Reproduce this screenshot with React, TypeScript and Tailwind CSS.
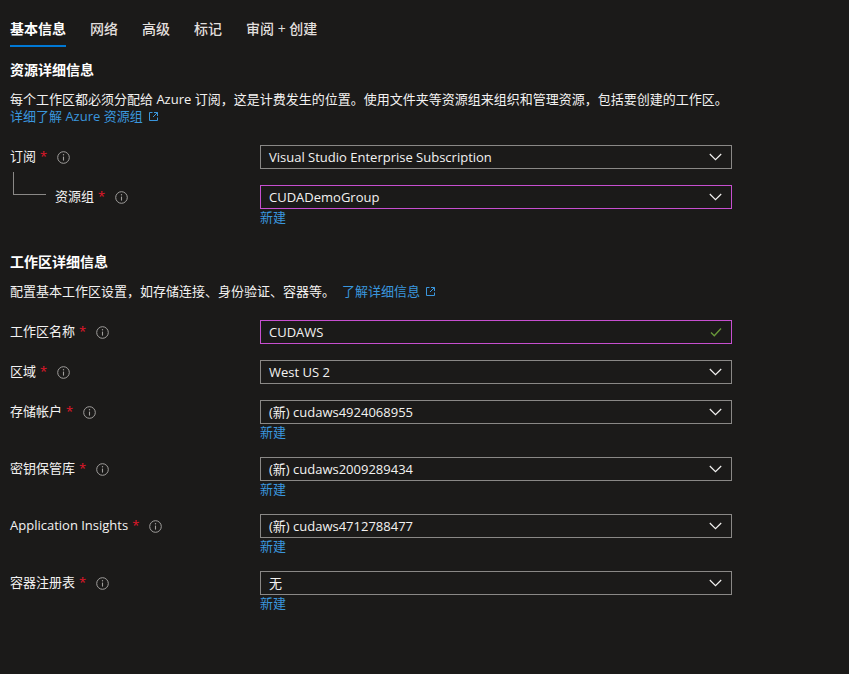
import React from 'react'

const font = "font-['Segoe_UI','Open_Sans','Noto_Sans_CJK_SC',sans-serif]"

function Info() {
  return (
    <svg width="13" height="13" viewBox="0 0 13 13" className="shrink-0">
      <circle cx="6.5" cy="6.5" r="5.8" fill="none" stroke="#a19f9d" strokeWidth="1" />
      <line x1="6.5" y1="5.6" x2="6.5" y2="9.6" stroke="#a19f9d" strokeWidth="1.1" />
      <circle cx="6.5" cy="3.8" r="0.7" fill="#a19f9d" />
    </svg>
  )
}

function ExtLink() {
  return (
    <svg width="11" height="11" viewBox="0 0 11 11" className="inline-block ml-[5px] -mt-[2px]">
      <path d="M4.5 1.5H1.5v8h8V6.5" fill="none" stroke="#3a96dd" strokeWidth="1" />
      <path d="M6 1.5h3.5V5M9.5 1.5L5 6" fill="none" stroke="#3a96dd" strokeWidth="1" />
    </svg>
  )
}

function Chevron() {
  return (
    <svg width="13" height="8" viewBox="0 0 13 8">
      <path d="M0.8 1l5.7 5.6L12.2 1" fill="none" stroke="#f3f2f1" strokeWidth="1.2" />
    </svg>
  )
}

function Check() {
  return (
    <svg width="12" height="10" viewBox="0 0 12 10">
      <path d="M1 5.5l3.3 3.2L11 1.5" fill="none" stroke="#6a9a3a" strokeWidth="1.3" />
    </svg>
  )
}

type RowProps = {
  label: string
  value: string
  pink?: boolean
  check?: boolean
  create?: boolean
  tree?: boolean
}

function Row({ label, value, pink, check, create, tree }: RowProps) {
  return (
    <div className="flex mb-4">
      <div className="w-[250px] h-6 flex items-center">
        {tree && (
          <div className="self-start ml-[3px] -mt-[13px] h-[23px] w-[33px] border-l border-b border-[#8a8886]" />
        )}
        <span className={`text-[13px] text-[#f3f2f1] ${tree ? 'ml-[9px]' : ''}`}>{label}</span>
        <span className="text-[13px] text-[#e3172a] ml-[4px]">*</span>
        <span className="ml-[10px] flex"><Info /></span>
      </div>
      <div className="w-[472px]">
        <div
          className={`h-6 border flex items-center justify-between pl-[8px] pr-[9px] ${pink ? 'border-[#c74fd0]' : 'border-[#8a8886]'}`}
        >
          <span className="text-[13px] text-[#f3f2f1] leading-none">{value}</span>
          {check ? <Check /> : <Chevron />}
        </div>
        {create && <div className="text-[13px] leading-[17px] text-[#3a96dd]">新建</div>}
      </div>
    </div>
  )
}

export default function App() {
  const tabs = ['基本信息', '网络', '高级', '标记', '审阅 + 创建']
  return (
    <div className={`w-[849px] h-[674px] bg-[#1b1a19] pl-[10px] ${font}`}>
      <div className="flex gap-6">
        {tabs.map((t, i) => (
          <div key={t} className="pt-[19px]">
            <div className={`text-[14px] leading-5 ${i === 0 ? 'font-semibold text-white' : 'font-medium text-[#e1dfdd]'}`}>{t}</div>
            <div className={`mt-[6px] h-[2px] ${i === 0 ? 'bg-[#0078d4]' : ''}`} />
          </div>
        ))}
      </div>

      <div className="mt-[13px] text-[14px] leading-5 font-semibold text-white">资源详细信息</div>
      <div className="mt-[11px] text-[13px] leading-[17px] text-[#f3f2f1]">
        每个工作区都必须分配给 Azure 订阅，这是计费发生的位置。使用文件夹等资源组来组织和管理资源，包括要创建的工作区。
      </div>
      <div className="text-[13px] leading-[17px] text-[#3a96dd]">
        详细了解 Azure 资源组<ExtLink />
      </div>

      <div className="mt-5">
        <Row label="订阅" value="Visual Studio Enterprise Subscription" />
        <Row label="资源组" value="CUDADemoGroup" pink create tree />
      </div>

      <div className="mt-[26px] text-[14px] leading-5 font-semibold text-white">工作区详细信息</div>
      <div className="mt-[11px] text-[13px] leading-[17px] text-[#f3f2f1]">
        配置基本工作区设置，如存储连接、身份验证、容器等。
        <span className="ml-[7px] text-[#3a96dd]">了解详细信息<ExtLink /></span>
      </div>

      <div className="mt-5">
        <Row label="工作区名称" value="CUDAWS" pink check />
        <Row label="区域" value="West US 2" />
        <Row label="存储帐户" value="(新) cudaws4924068955" create />
        <Row label="密钥保管库" value="(新) cudaws2009289434" create />
        <Row label="Application Insights" value="(新) cudaws4712788477" create />
        <Row label="容器注册表" value="无" create />
      </div>
    </div>
  )
}
